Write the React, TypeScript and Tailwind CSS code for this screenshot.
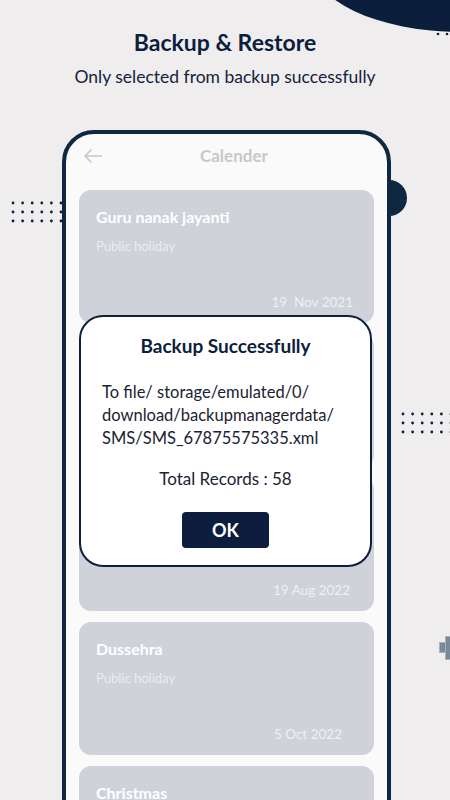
import React from "react";

const cards = [
  { title: "Guru nanak jayanti", sub: "Public holiday", date: "19  Nov 2021", pr: "pr-[4px]" },
  { title: "Raksha bandhan", sub: "Public holiday", date: "12 Aug 2022", pr: "pr-[6px]" },
  { title: "Janmashtami", sub: "Public holiday", date: "19 Aug 2022", pr: "pr-[7px]" },
  { title: "Dussehra", sub: "Public holiday", date: "5 Oct 2022", pr: "pr-[15px]" },
  { title: "Christmas", sub: "Public holiday", date: "25 Dec 2022", pr: "pr-[6px]" },
];

const DotGrid = ({ cols, className }: { cols: number; className: string }) => {
  const dots = [];
  for (let r = 0; r < 3; r++) {
    for (let c = 0; c < cols; c++) {
      dots.push(<circle key={r + "-" + c} cx={2 + c * 9.6} cy={2 + r * 9} r={1.4} fill="#0d1f3c" />);
    }
  }
  return (
    <svg className={className} width={cols * 9.6 + 4} height={24}>
      {dots}
    </svg>
  );
};

const App = () => {
  return (
    <div
      className="relative w-[450px] h-[800px] overflow-hidden bg-[#efedee]"
      style={{ fontFamily: "Lato, 'Open Sans', sans-serif" }}
    >
      {/* decorations */}
      <svg className="absolute left-0 top-0" width={450} height={40}>
        <ellipse cx={460} cy={-40} rx={150} ry={72} fill="#0b1f3c" />
        <circle cx={438} cy={34} r={1.3} fill="#0d1f3c" />
        <circle cx={447} cy={34} r={1.3} fill="#0d1f3c" />
      </svg>
      <DotGrid cols={6} className="absolute left-[11px] top-[201px]" />
      <DotGrid cols={6} className="absolute left-[401px] top-[412px]" />
      <div className="absolute left-[371px] top-[180px] w-[36px] h-[36px] rounded-full bg-[#0d2840]" />
      <div className="absolute left-[439px] top-[642px] w-[14px] h-[11px] bg-[#7a8a99] border border-[#a9b3bd]" />
      <div className="absolute left-[445px] top-[636px] w-[8px] h-[24px] bg-[#7a8a99] border border-[#a9b3bd]" />

      {/* heading */}
      <div className="flex flex-col items-center pt-[26px]">
        <h1 className="text-[23px] leading-[32px] font-bold text-[#0c1d3d]">Backup &amp; Restore</h1>
        <p className="mt-[7px] text-[17.5px] leading-[24px] text-[#15223d]">
          Only selected from backup successfully
        </p>
      </div>

      {/* phone */}
      <div className="relative ml-[62px] mt-[41px] w-[329px] h-[700px] rounded-t-[32px] border-4 border-[#0d2840] bg-[#fafafa]">
        <div className="flex items-center h-[44px] pl-[17px]">
          <svg width={20} height={16} viewBox="0 0 20 16" fill="none" stroke="#c9c9c9" strokeWidth={1.6}>
            <path d="M19 8H2M8.5 1.5L2 8l6.5 6.5" />
          </svg>
          <span className="ml-[97px] text-[17px] font-bold text-[#c8c8c8]">Calender</span>
        </div>
        <div className="flex flex-col gap-[11px] mt-[12px] px-[13px]">
          {cards.map((c) => (
            <div key={c.title} className="flex flex-col h-[133px] rounded-[12px] bg-[#cfd2d9] px-[17px] pt-[16px] pb-[11px]">
              <span className="text-[16px] leading-[22px] font-bold text-white">{c.title}</span>
              <span className="mt-[9px] text-[13px] leading-[19px] text-[#eaecef]">{c.sub}</span>
              <span className={"mt-auto self-end whitespace-pre text-[13.5px] leading-[19px] text-[#eef0f3] " + c.pr}>{c.date}</span>
            </div>
          ))}
        </div>
      </div>

      {/* dialog */}
      <div className="absolute left-[79px] top-[315px] w-[293px] h-[252px] rounded-[24px] border-2 border-[#0d1f3c] bg-white flex flex-col">
        <h2 className="mt-[16px] text-center text-[19px] leading-[26px] font-bold text-[#0c1d3d]">Backup Successfully</h2>
        <p className="mt-[22px] px-[21px] text-[16.5px] leading-[23px] text-[#1b2233]">
          To file/ storage/emulated/0/
          <br />
          download/backupmanagerdata/
          <br />
          SMS/SMS_67875575335.xml
        </p>
        <p className="mt-[18px] text-center text-[17px] leading-[22px] text-[#1b2233]">Total Records : 58</p>
        <div className="flex justify-center mt-[22px]">
          <button className="w-[87px] h-[36px] rounded-[4px] bg-[#0c1d3d] text-white text-[18px] font-bold">OK</button>
        </div>
      </div>
    </div>
  );
};

export default App;
